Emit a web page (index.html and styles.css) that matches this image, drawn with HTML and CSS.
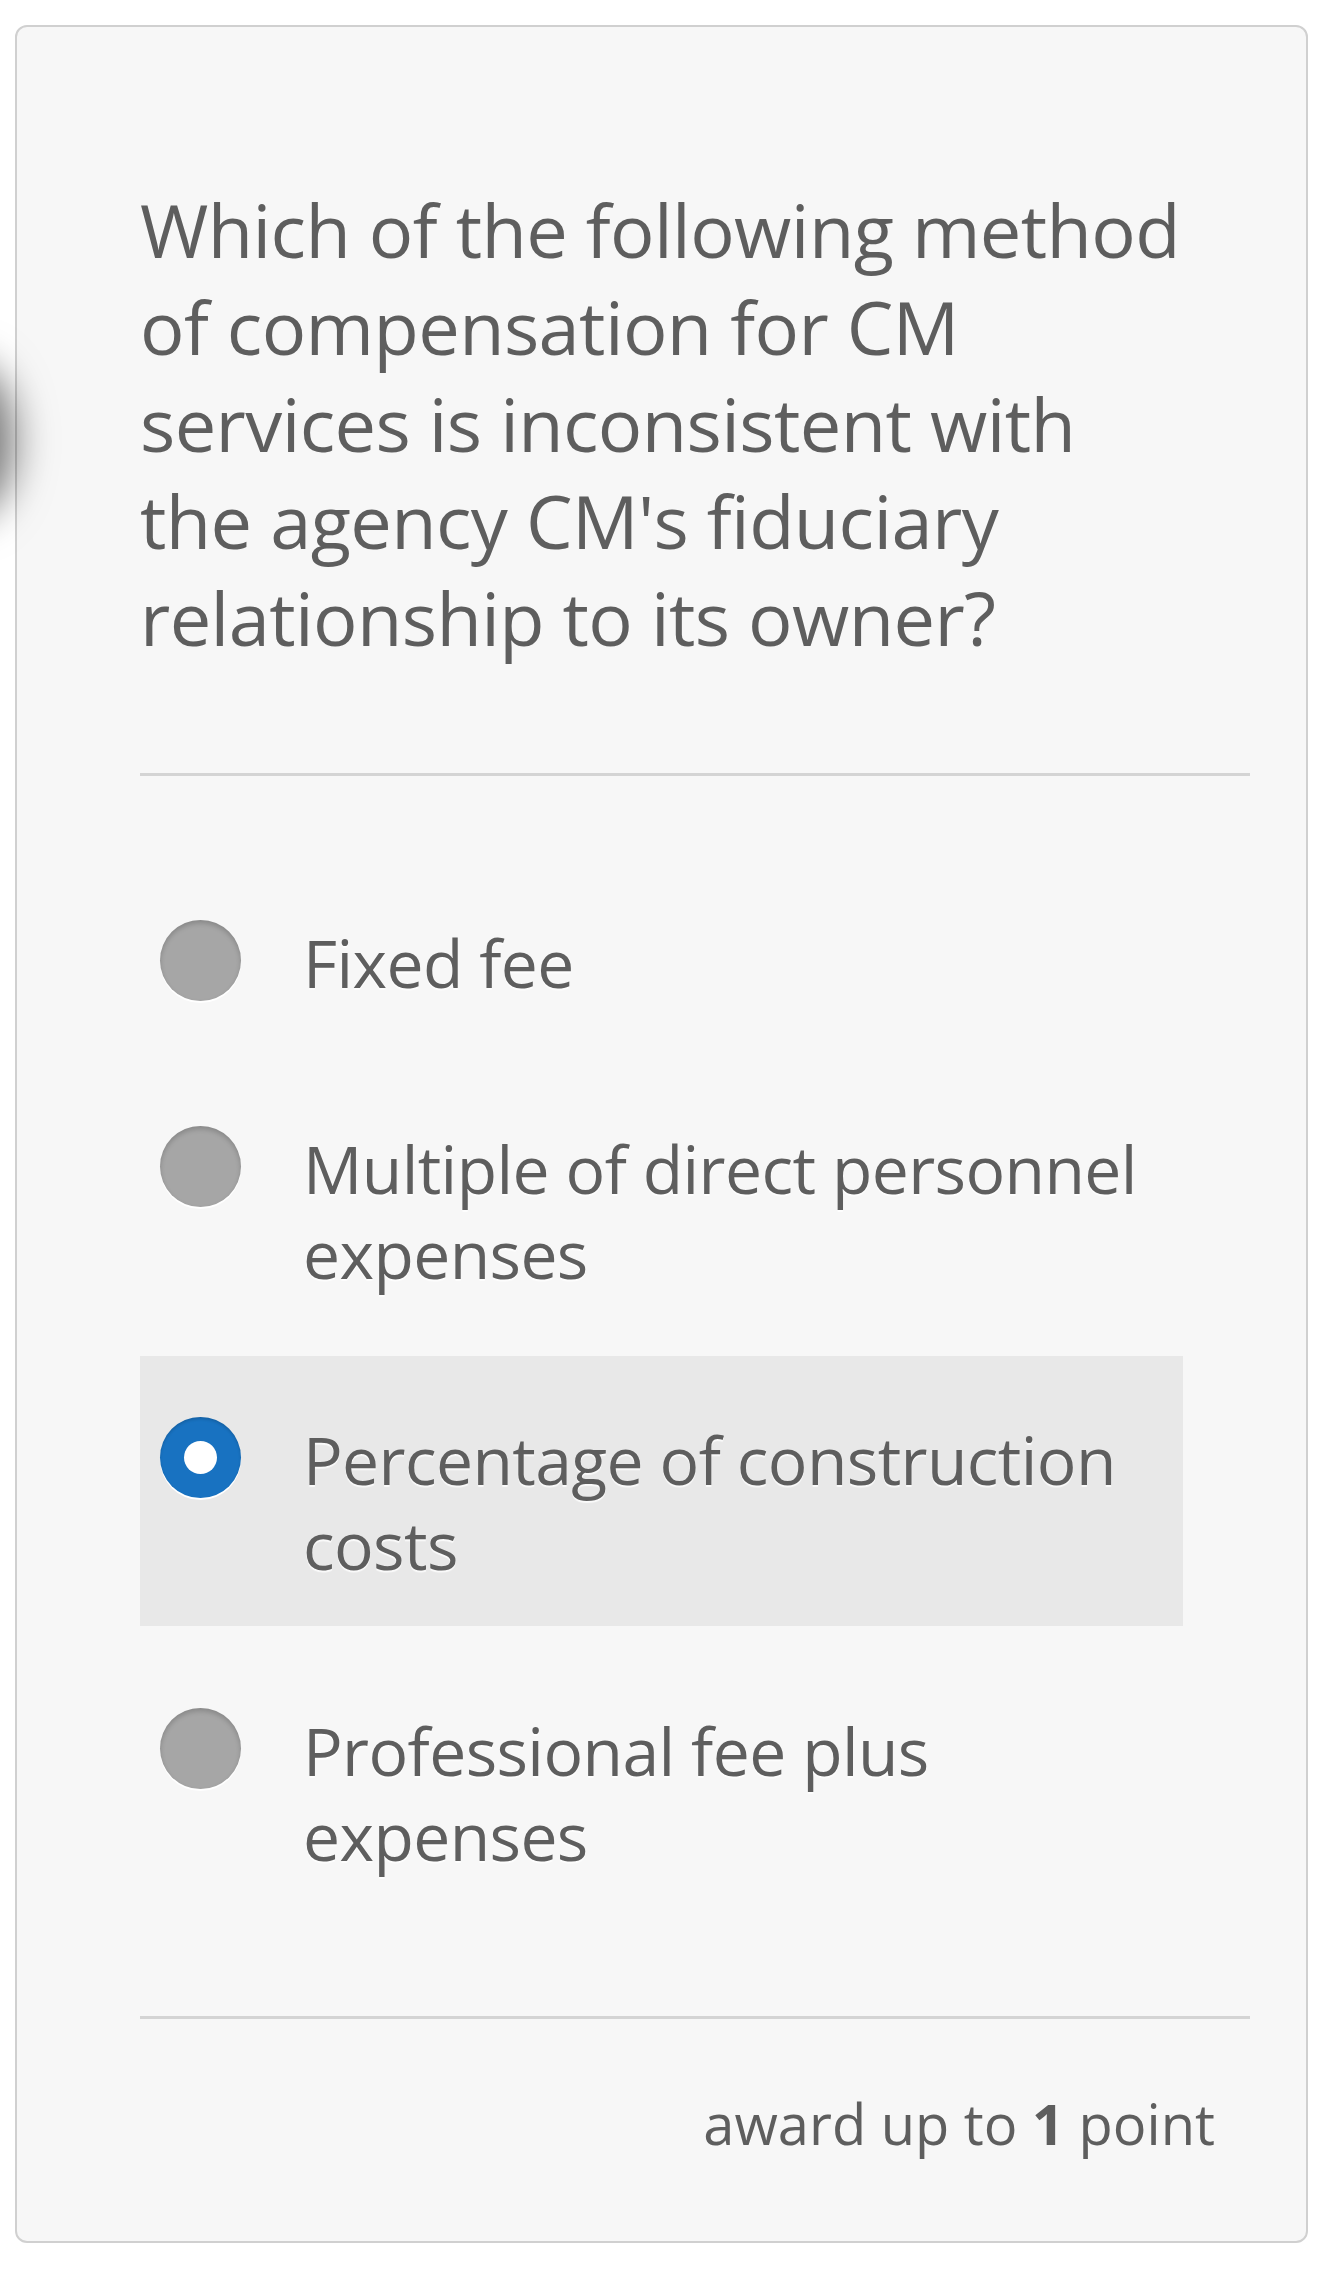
FILE: index.html
```html
<!DOCTYPE html>
<html lang="en">
<head>
    <meta charset="UTF-8">
    <meta name="viewport" content="width=device-width, initial-scale=1.0">
    <title>Question</title>
    <link rel="stylesheet" href="styles.css">
</head>
<body>
    <!-- shadow of the side drawer handle, off screen -->
    <div class="edge-shadow"></div>

    <!-- question card -->
    <div class="card">
        <h2 class="question">Which of the following method of compensation for CM services is inconsistent with the agency CM's fiduciary relationship to its owner?</h2>

        <hr class="divider">

        <form class="options">
            <label class="option">
                <input type="radio" name="answer" value="a">
                <span class="label">Fixed fee</span>
            </label>
            <label class="option">
                <input type="radio" name="answer" value="b">
                <span class="label">Multiple of direct personnel expenses</span>
            </label>
            <label class="option selected">
                <input type="radio" name="answer" value="c" checked>
                <span class="label">Percentage of construction costs</span>
            </label>
            <label class="option">
                <input type="radio" name="answer" value="d">
                <span class="label">Professional fee plus expenses</span>
            </label>
        </form>

        <hr class="divider bottom">

        <p class="points">award up to <b>1</b> point</p>
    </div>
</body>
</html>
```

FILE: styles.css
```css
/* page */
body {
    margin: 0;
    background-color: #ffffff;
    font-family: "Open Sans", "Noto Sans", sans-serif;
    color: #5e5e5e;
    position: relative;
}

.edge-shadow {
    position: absolute;
    left: -70px;
    top: 375px;
    width: 70px;
    height: 130px;
    border-radius: 50%;
    background-color: #777;
    box-shadow: 0 0 40px 14px rgba(0, 0, 0, 0.55);
}

/* card */
.card {
    margin: 25px 26px 0 15px;
    padding: 154px 56px 80px 123px;
    border: 2px solid #d0d0d0;
    border-radius: 12px;
    background-color: #f7f7f7;
}

.question {
    margin: 0;
    max-width: 1060px;
    font-size: 74px;
    font-weight: 400;
    line-height: 97px;
    letter-spacing: -0.6px;
}

.divider {
    margin: 107px 0 0 0;
    border: none;
    border-top: 3px solid #d4d4d4;
    height: 0;
}

.divider.bottom {
    margin-top: 99px;
}

/* answers */
.options {
    margin-top: 83px;
    width: 1043px;
    display: flex;
    flex-direction: column;
    gap: 21px;
}

.option {
    display: flex;
    align-items: flex-start;
    gap: 62px;
    padding: 61px 20px 39px 20px;
    cursor: pointer;
}

.option.selected {
    background-color: #e8e8e8;
}

.option input {
    appearance: none;
    -webkit-appearance: none;
    flex: none;
    width: 81px;
    height: 81px;
    margin: 0;
    border-radius: 50%;
    background-color: #a6a6a6;
    box-shadow: inset 0 3px 5px rgba(0, 0, 0, 0.18), 0 2px 0 #ffffff;
    position: relative;
}

.option input:checked {
    background-color: #1872c1;
    box-shadow: inset 0 2px 3px rgba(0, 0, 0, 0.15), 0 2px 0 #ffffff;
}

.option input:checked::after {
    content: "";
    position: absolute;
    left: 24px;
    top: 24px;
    width: 33px;
    height: 33px;
    border-radius: 50%;
    background-color: #ffffff;
}

.label {
    font-size: 66px;
    line-height: 85px;
    letter-spacing: -0.6px;
    text-shadow: 0 2px 1px rgba(255, 255, 255, 0.8);
}

/* footer */
.points {
    margin: 66px 35px 0 0;
    text-align: right;
    font-size: 56px;
    line-height: 76px;
}

.points b {
    font-weight: 700;
}
```
